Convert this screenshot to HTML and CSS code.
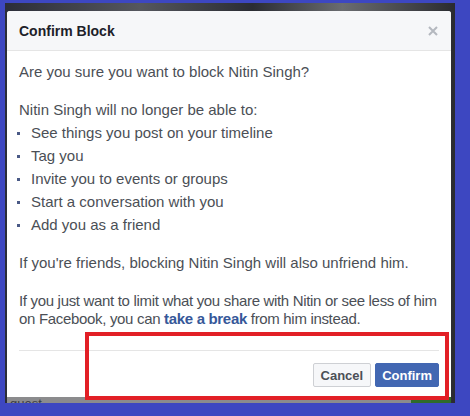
FILE: index.html
```html
<!DOCTYPE html>
<html lang="en">
  <head>
    <meta charset="UTF-8" />
    <title>Confirm Block</title>
    <link rel="stylesheet" href="styles.css">
  </head>
  <body>
    <div class="frame">
      <div class="backdrop">
        <div class="dialog">
          <header class="dialog-head">
            <h1>Confirm Block</h1>
            <svg class="close" width="10" height="10" viewBox="0 0 10 10">
              <path d="M1 1L9 9M9 1L1 9" stroke="#b4b8bf" stroke-width="2" />
            </svg>
          </header>
          <div class="dialog-body">
            <p>Are you sure you want to block Nitin Singh?</p>
            <p class="tight">Nitin Singh will no longer be able to:</p>
            <ul>
              <li>See things you post on your timeline</li>
              <li>Tag you</li>
              <li>Invite you to events or groups</li>
              <li>Start a conversation with you</li>
              <li>Add you as a friend</li>
            </ul>
            <p>If you're friends, blocking Nitin Singh will also unfriend him.</p>
            <p class="condensed">If you just want to limit what you share with Nitin or see less of him on Facebook, you can <a href="#">take a break</a> from him instead.</p>
          </div>
          <footer class="dialog-foot">
            <button class="btn cancel">Cancel</button>
            <button class="btn confirm">Confirm</button>
          </footer>
        </div>
        <div class="strip"><span>guest</span><span class="green"></span></div>
      </div>
      <div class="highlight"></div>
    </div>
  </body>
</html>
```

FILE: styles.css
```css
* {
  margin: 0;
  box-sizing: border-box;
}

body {
  background-color: #3d47c1;
  font-family: "Liberation Sans", Arial, sans-serif;
  color: #4b4f56;
}

.frame {
  position: relative;
  width: 470px;
  height: 416px;
  padding: 3px 15px 0 5px;
  overflow: hidden;
}

.backdrop {
  background: linear-gradient(90deg, #2b2d38 0%, #55575e 30%, #2a2c33 55%, #6a6c70 75%, #2a2b30 100%);
  padding: 8px 4px 0 2px;
}

.dialog {
  background-color: white;
  border-radius: 3px 3px 0 0;
  overflow: hidden;
}

.dialog-head {
  height: 40px;
  display: flex;
  align-items: center;
  justify-content: space-between;
  padding: 0 13px 0 12px;
  background-color: #f6f7f9;
  border-bottom: 1px solid #e5e5e5;
}

.dialog-head h1 {
  font-size: 14px;
  font-weight: bold;
  color: #1d2129;
  line-height: 18px;
}

.dialog-body {
  padding: 12px 4px 22px 12px;
  font-size: 15px;
  line-height: 18px;
}

.dialog-body p {
  margin-bottom: 20px;
}

.dialog-body p.tight,
.dialog-body p:last-child {
  margin-bottom: 0;
}

.dialog-body .condensed {
  letter-spacing: -0.32px;
}

.dialog-body a {
  color: #365899;
  font-weight: bold;
  text-decoration: none;
}

ul {
  list-style: none;
  padding-left: 12px;
  margin-bottom: 20px;
}

li {
  display: flex;
  align-items: center;
  padding-top: 5px;
}

li::before {
  content: "";
  width: 3px;
  height: 3px;
  background-color: #4a5a86;
  margin-left: -14px;
  margin-right: 11px;
  flex-shrink: 0;
}

.dialog-foot {
  margin: 0 12px;
  padding: 12px 0 10px;
  border-top: 1px solid #e5e5e5;
  display: flex;
  justify-content: flex-end;
  gap: 4px;
}

.btn {
  height: 24px;
  padding: 0 7px;
  border-radius: 2px;
  font-family: "Liberation Sans", Arial, sans-serif;
  font-size: 13px;
  font-weight: bold;
  border: 1px solid #ced0d4;
}

.cancel {
  background-color: #f6f7f9;
  color: #4b4f56;
}

.confirm {
  padding: 0 6px;
  background-color: #4267b2;
  border-color: #4267b2;
  color: white;
}

.strip {
  height: 6px;
  background-color: #8b8b8d;
  display: flex;
  overflow: hidden;
  font-size: 13px;
  line-height: 14px;
  color: #3a3c44;
  padding-left: 3px;
}

.strip .green {
  margin-left: auto;
  width: 40px;
  background-color: #2f6b2a;
}

.highlight {
  position: absolute;
  left: 85px;
  top: 332px;
  width: 364px;
  height: 68px;
  border: 4px solid #e21f26;
}
```
